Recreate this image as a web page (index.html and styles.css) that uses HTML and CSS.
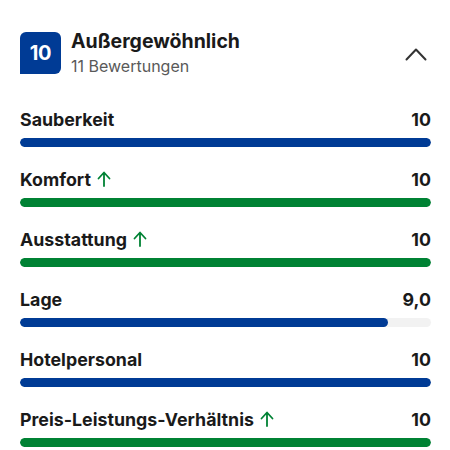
FILE: index.html
```html
<!DOCTYPE html>
<html lang="de">
<head>
<meta charset="utf-8">
<link rel="stylesheet" href="styles.css">
</head>
<body>
<div class="page">
  <div class="header">
    <div class="badge">10</div>
    <div class="head-text">
      <div class="title">Außergewöhnlich</div>
      <div class="subtitle">11 Bewertungen</div>
    </div>
    <svg class="chevron" width="24" height="14" viewBox="0 0 24 14"><path d="M2.5 12.5 L12 2.5 L21.5 12.5" fill="none" stroke="#333" stroke-width="2" stroke-linecap="round" stroke-linejoin="round"/></svg>
  </div>

  <div class="rows">
    <div class="row">
      <div class="line"><span class="label">Sauberkeit</span><span class="value">10</span></div>
      <div class="track"><div class="fill blue" style="width:100%"></div></div>
    </div>
    <div class="row">
      <div class="line"><span class="label">Komfort<svg class="up" width="14" height="16" viewBox="0 0 14 16"><path d="M7 15 V2 M1.5 7.5 L7 1.5 L12.5 7.5" fill="none" stroke="#008234" stroke-width="1.8" stroke-linecap="round" stroke-linejoin="round"/></svg></span><span class="value">10</span></div>
      <div class="track"><div class="fill green" style="width:100%"></div></div>
    </div>
    <div class="row">
      <div class="line"><span class="label">Ausstattung<svg class="up" width="14" height="16" viewBox="0 0 14 16"><path d="M7 15 V2 M1.5 7.5 L7 1.5 L12.5 7.5" fill="none" stroke="#008234" stroke-width="1.8" stroke-linecap="round" stroke-linejoin="round"/></svg></span><span class="value">10</span></div>
      <div class="track"><div class="fill green" style="width:100%"></div></div>
    </div>
    <div class="row">
      <div class="line"><span class="label">Lage</span><span class="value">9,0</span></div>
      <div class="track"><div class="fill blue" style="width:89.5%"></div></div>
    </div>
    <div class="row">
      <div class="line"><span class="label">Hotelpersonal</span><span class="value">10</span></div>
      <div class="track"><div class="fill blue" style="width:100%"></div></div>
    </div>
    <div class="row">
      <div class="line"><span class="label">Preis-Leistungs-Verhältnis<svg class="up" width="14" height="16" viewBox="0 0 14 16"><path d="M7 15 V2 M1.5 7.5 L7 1.5 L12.5 7.5" fill="none" stroke="#008234" stroke-width="1.8" stroke-linecap="round" stroke-linejoin="round"/></svg></span><span class="value">10</span></div>
      <div class="track"><div class="fill green" style="width:100%"></div></div>
    </div>
  </div>
</div>
</body>
</html>
```
FILE: styles.css
```css
html, body {
  margin: 0;
  padding: 0;
  background: #fff;
}
body {
  font-family: Inter, "Noto Sans", sans-serif;
  color: #1a1a1a;
  width: 450px;
  height: 450px;
  overflow: hidden;
}
.page {
  padding: 32px 19px 0 20px;
}
.header {
  display: flex;
  align-items: flex-start;
  gap: 10px;
}
.badge {
  width: 41px;
  height: 42px;
  background: #003b95;
  color: #fff;
  border-radius: 6px 6px 6px 0;
  display: flex;
  align-items: center;
  justify-content: center;
  font-weight: 700;
  font-size: 20px;
  letter-spacing: -0.3px;
}
.head-text {
  flex: 1;
  margin-top: -2px;
}
.title {
  font-size: 19.5px;
  line-height: 22px;
  font-weight: 700;
  color: #1a1a1a;
}
.subtitle {
  font-size: 16px;
  line-height: 20px;
  color: #595959;
  margin-top: 4px;
}
.chevron {
  margin-top: 15px;
  margin-right: 3px;
}
.rows {
  margin-top: 33px;
  display: flex;
  flex-direction: column;
  gap: 22px;
}
.row {
  display: flex;
  flex-direction: column;
  gap: 7px;
}
.line {
  display: flex;
  justify-content: space-between;
  align-items: baseline;
  font-size: 17.8px;
  line-height: 22px;
  font-weight: 700;
  color: #1a1a1a;
}
.label {
  display: flex;
  align-items: center;
}
.up {
  margin-left: 6px;
  position: relative;
  top: -1px;
}
.track {
  height: 9px;
  border-radius: 5px;
  background: #f2f2f2;
  overflow: hidden;
}
.fill {
  height: 100%;
  border-radius: 5px;
}
.blue { background: #003b95; }
.green { background: #008234; }
```
